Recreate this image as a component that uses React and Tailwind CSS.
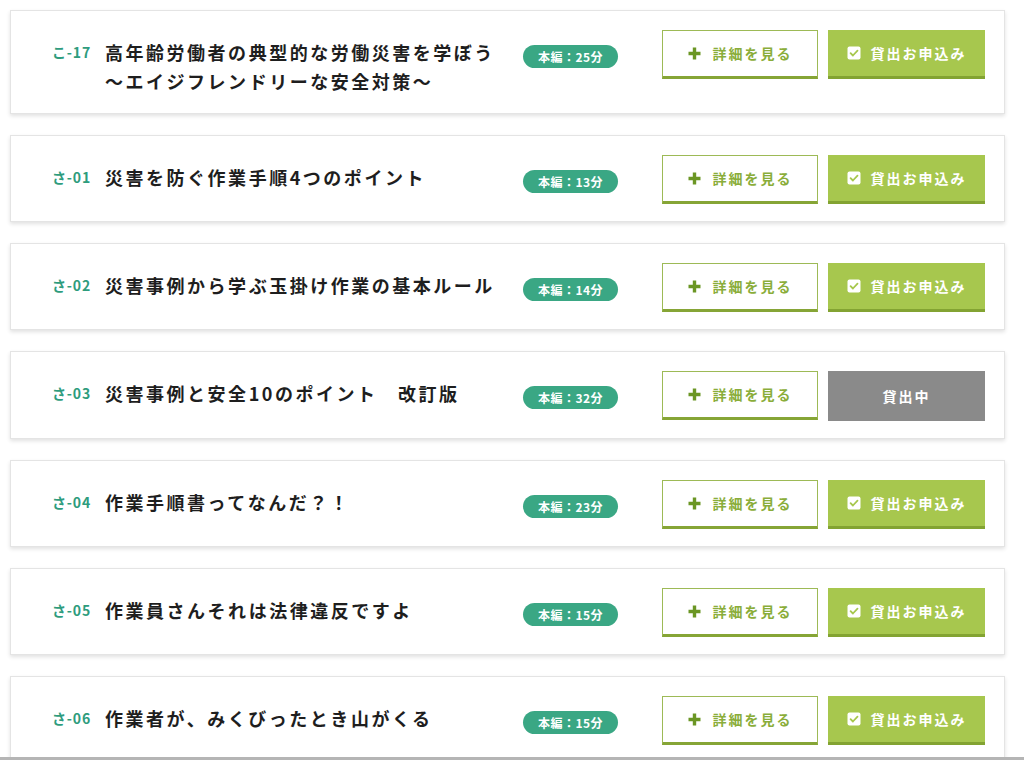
import React from "react";

const items = [
  { code: "こ-17", title: ["高年齢労働者の典型的な労働災害を学ぼう", "～エイジフレンドリーな安全対策～"], time: "25", lent: false },
  { code: "さ-01", title: ["災害を防ぐ作業手順4つのポイント"], time: "13", lent: false },
  { code: "さ-02", title: ["災害事例から学ぶ玉掛け作業の基本ルール"], time: "14", lent: false },
  { code: "さ-03", title: ["災害事例と安全10のポイント　改訂版"], time: "32", lent: true },
  { code: "さ-04", title: ["作業手順書ってなんだ？！"], time: "23", lent: false },
  { code: "さ-05", title: ["作業員さんそれは法律違反ですよ"], time: "15", lent: false },
  { code: "さ-06", title: ["作業者が、みくびったとき山がくる"], time: "15", lent: false },
];

const font = { fontFamily: '"Noto Sans CJK JP", "Noto Sans", sans-serif' };

function PlusIcon() {
  return (
    <svg width="13" height="13" viewBox="0 0 13 13" className="shrink-0">
      <path d="M6.5 0.5v12M0.5 6.5h12" stroke="#6b9624" strokeWidth="3.4" strokeLinecap="butt" />
    </svg>
  );
}

function CheckIcon() {
  return (
    <svg width="14" height="14" viewBox="0 0 14 14" className="shrink-0">
      <rect x="0.5" y="0.5" width="13" height="13" rx="2" fill="#ffffff" />
      <path d="M3.6 7.2l2.3 2.3 4.6-4.8" fill="none" stroke="#a6c74c" strokeWidth="1.8" strokeLinecap="round" strokeLinejoin="round" />
    </svg>
  );
}

function Card({ item }) {
  return (
    <div className="flex items-start bg-white border border-[#e4e4e4] shadow-[0_2px_4px_rgba(0,0,0,0.12)] pl-[41px] pr-[19px] pt-[19px] pb-[17px]">
      <div className="flex flex-1 items-start pt-[8px]">
        <div className="w-[53px] shrink-0 text-[14px] leading-[29px] font-semibold text-[#2e9c7d] tracking-[0.06em]">
          {item.code}
        </div>
        <div className="flex-1 text-[18px] leading-[29px] font-bold text-[#1e1e1e] tracking-[0.14em]">
          {item.title.map((t, i) => (
            <div key={i}>{t}</div>
          ))}
        </div>
      </div>
      <div className="mt-[15px] w-[95px] h-[23px] shrink-0 rounded-full bg-[#3aa784] flex items-center justify-center text-white text-[12px] font-bold tracking-[0.04em]">
        本編：{item.time}分
      </div>
      <div className="ml-[44px] flex gap-[10px] shrink-0">
        <div className="w-[156px] h-[49px] bg-white border border-[#9dba56] border-b-[3px] border-b-[#86a536] flex items-center justify-center gap-[12px] text-[14px] font-bold text-[#8aad3a] tracking-[0.14em]">
          <PlusIcon />
          <span>詳細を見る</span>
        </div>
        {item.lent ? (
          <div className="w-[157px] h-[50px] bg-[#8a8a8a] flex items-center justify-center text-[14px] font-bold text-white tracking-[0.14em]">
            貸出中
          </div>
        ) : (
          <div className="w-[157px] h-[49px] bg-[#a7c74e] border-b-[3px] border-b-[#83a332] flex items-center justify-center gap-[10px] text-[14px] font-bold text-white tracking-[0.14em]">
            <CheckIcon />
            <span>貸出お申込み</span>
          </div>
        )}
      </div>
    </div>
  );
}

export default function App() {
  return (
    <div className="h-[760px] overflow-hidden bg-white relative" style={font}>
      <div className="w-[995px] ml-[10px] pt-[10px] flex flex-col gap-[21px]">
        {items.map((it) => (
          <Card key={it.code} item={it} />
        ))}
      </div>
      <div className="absolute left-0 right-0 bottom-0 h-[3px] bg-[#b5b5b5]" />
    </div>
  );
}
